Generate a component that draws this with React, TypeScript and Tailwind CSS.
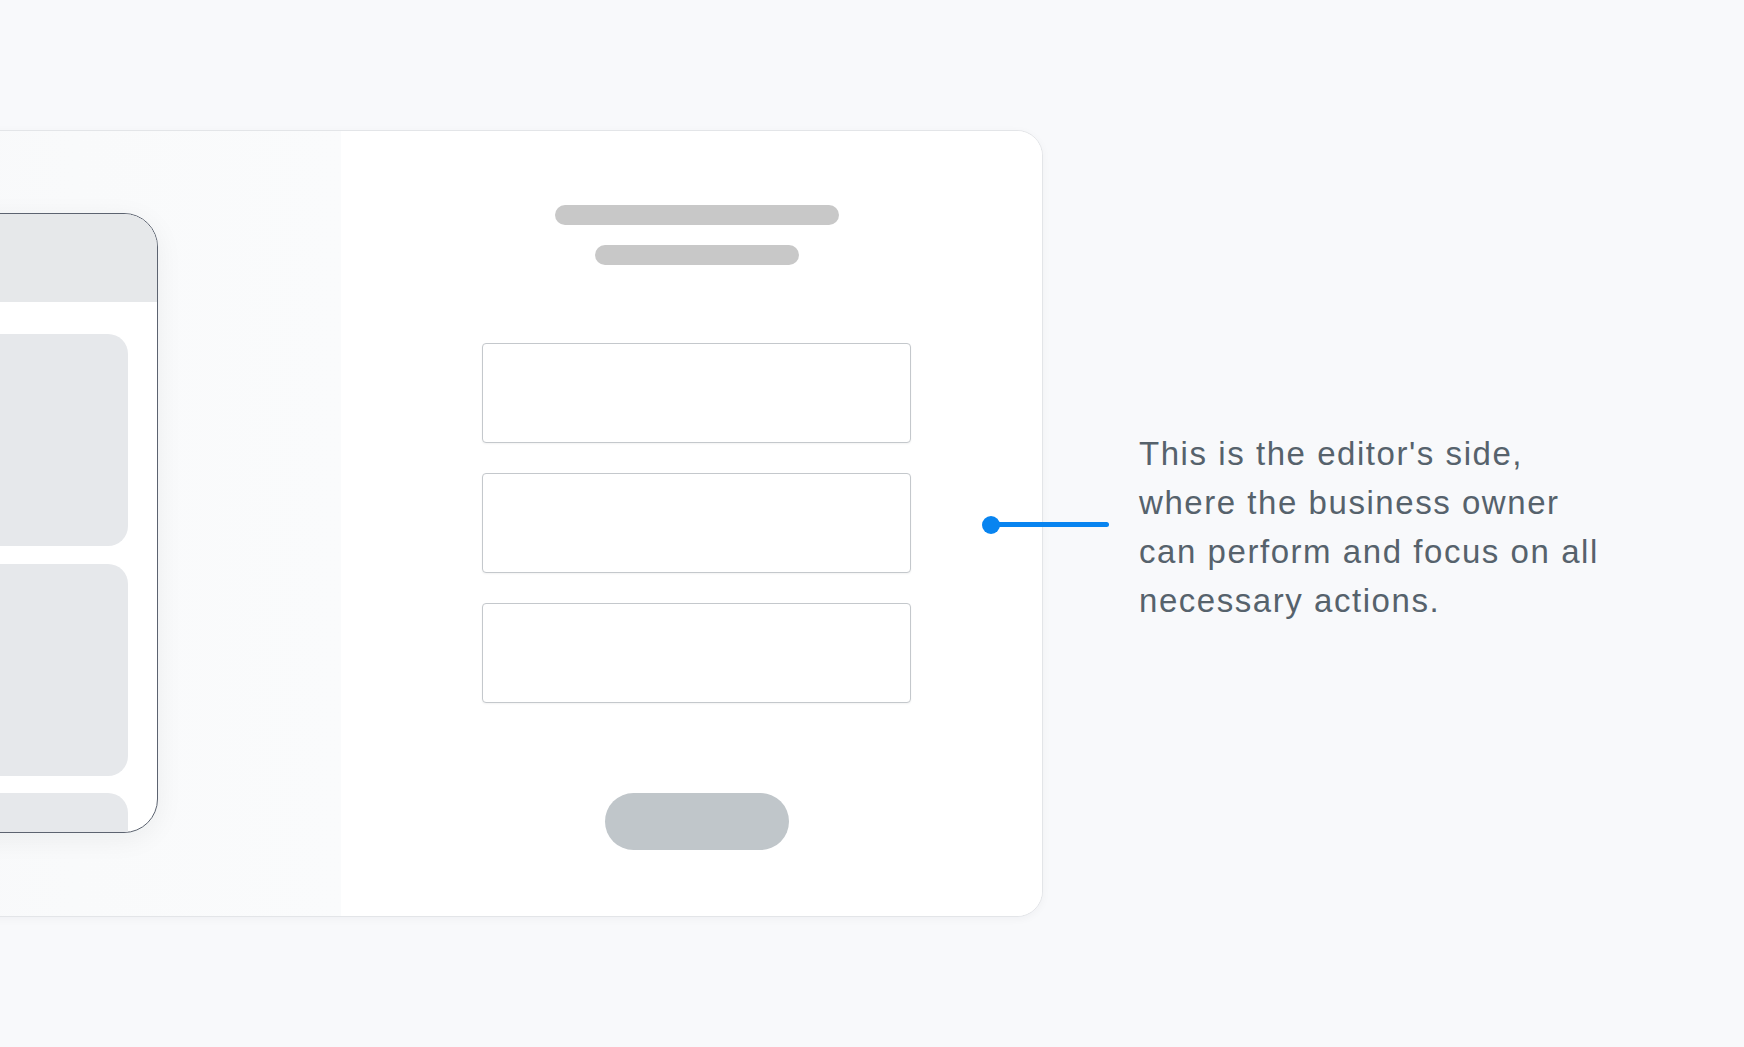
import React from "react";

export default function App() {
  return (
    <div className="min-h-screen w-full overflow-hidden bg-[#f8f9fb] pt-[130px]" style={{ fontFamily: '"Liberation Sans", Arial, sans-serif' }}>
      <div className="flex items-start">
        {/* Card */}
        <div className="-ml-[200px] flex h-[787px] w-[1243px] shrink-0 overflow-hidden rounded-[26px] border border-[#e3e5e8] bg-white shadow-[0_2px_8px_rgba(20,30,40,0.04)]">
          {/* Left preview panel */}
          <div className="flex h-full w-[540px] shrink-0 justify-end bg-linear-to-r from-[#f7f8fa] via-[#f9fafb] to-[#fafbfc] pr-[183px] pt-[82px]">
            <div className="flex h-[620px] w-[320px] flex-col overflow-hidden rounded-[34px] border border-[#5c6370] bg-white shadow-[0_6px_28px_rgba(20,30,40,0.06)]">
              <div className="h-[88px] shrink-0 bg-[#e6e8ea]" />
              <div className="flex flex-col gap-[18px] pl-[30px] pr-[29px] pt-[32px]">
                <div className="h-[212px] rounded-[20px] bg-[#e6e8eb]" />
                <div className="h-[212px] rounded-[20px] bg-[#e6e8eb]" />
                <div className="-mt-[1px] h-[212px] shrink-0 rounded-[20px] bg-[#e6e8eb]" />
              </div>
            </div>
          </div>
          {/* Right editor panel */}
          <div className="flex h-full flex-1 flex-col items-center bg-white pl-[10px] pt-[74px]">
            <div className="h-[20px] w-[284px] rounded-full bg-[#c8c8c8]" />
            <div className="mt-[20px] h-[20px] w-[204px] rounded-full bg-[#c8c8c8]" />
            <div className="mt-[78px] flex flex-col gap-[30px]">
              <div className="h-[100px] w-[429px] rounded-[4px] border border-[#c4c8cc] bg-white shadow-[0_1px_2px_rgba(0,0,0,0.05)]" />
              <div className="h-[100px] w-[429px] rounded-[4px] border border-[#c4c8cc] bg-white shadow-[0_1px_2px_rgba(0,0,0,0.05)]" />
              <div className="h-[100px] w-[429px] rounded-[4px] border border-[#c4c8cc] bg-white shadow-[0_1px_2px_rgba(0,0,0,0.05)]" />
            </div>
            <div className="mt-[90px] h-[57px] w-[184px] rounded-full bg-[#c0c6ca]" />
          </div>
        </div>

        {/* Annotation */}
        <div className="relative ml-[96px] mt-[299px] shrink-0">
          <div className="absolute left-[-148px] top-[93px] h-[5px] w-[118px] rounded-full bg-[#0884f0]" />
          <div className="absolute left-[-157px] top-[87px] h-[18px] w-[18px] rounded-full bg-[#0884f0]" />
          <p className="text-[33px] leading-[49px] tracking-[1.55px] text-[#56626c] whitespace-nowrap">
            This is the editor's side,
            <br />
            where the business owner
            <br />
            can perform and focus on all
            <br />
            necessary actions.
          </p>
        </div>
      </div>
    </div>
  );
}
